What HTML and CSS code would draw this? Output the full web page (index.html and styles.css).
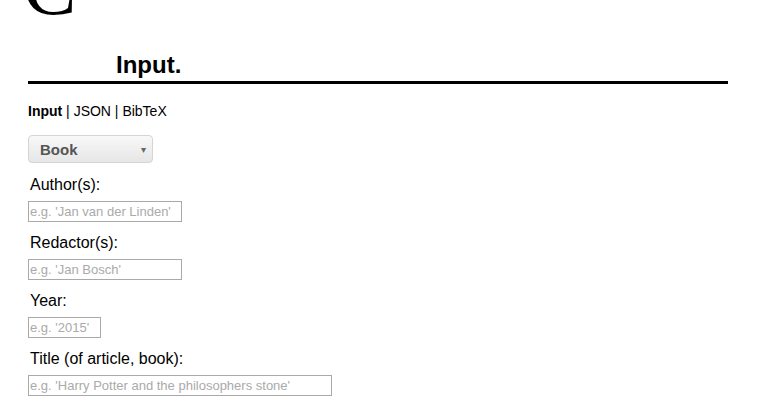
FILE: index.html
```html
<!DOCTYPE html>
<html>
<head>
<meta charset="utf-8">
<link rel="stylesheet" href="styles.css">
</head>
<body>
<div class="logo"><span class="logo-c">C</span></div>
<div class="page">
  <h1 class="title">Input.</h1>
  <nav class="tabs"><b>Input</b> | JSON | BibTeX</nav>
  <div class="select"><span class="select-text">Book</span><span class="select-arrow">▾</span></div>
  <form class="form">
    <div class="field">
      <label class="label">Author(s):</label>
      <input class="input w-md" placeholder="e.g. 'Jan van der Linden'">
    </div>
    <div class="field">
      <label class="label">Redactor(s):</label>
      <input class="input w-md" placeholder="e.g. 'Jan Bosch'">
    </div>
    <div class="field">
      <label class="label">Year:</label>
      <input class="input w-sm" placeholder="e.g. '2015'">
    </div>
    <div class="field">
      <label class="label">Title (of article, book):</label>
      <input class="input w-lg" placeholder="e.g. 'Harry Potter and the philosophers stone'">
    </div>
  </form>
</div>
</body>
</html>
```
FILE: styles.css
```css
html, body {
  margin: 0;
  padding: 0;
  background: #fff;
  overflow: hidden;
}
body {
  font-family: "Liberation Sans", Arial, sans-serif;
  color: #000;
}
.logo {
  height: 20px;
  overflow: hidden;
  padding-left: 23px;
}
.logo-c {
  display: block;
  font-family: "Liberation Serif", serif;
  font-size: 80px;
  line-height: 80px;
  margin-top: -53px;
}
.page {
  width: 700px;
  margin-left: 28px;
}
.title {
  margin: 0;
  padding: 31px 0 2px 88px;
  font-size: 24px;
  font-weight: bold;
  line-height: 28px;
  border-bottom: 3px solid #000;
}
.tabs {
  margin-top: 19px;
  font-size: 14px;
  line-height: 16px;
}
.select {
  margin-top: 16px;
  height: 26px;
  border: 1px solid #d4d4d4;
  border-radius: 4px;
  background: linear-gradient(#f8f8f8, #e6e6e6);
  display: flex;
  align-items: center;
  justify-content: space-between;
  padding: 0 6px 0 11px;
  box-sizing: content-box;
  width: 106px;
  color: #555;
}
.select-text {
  font-weight: bold;
  font-size: 15px;
}
.select-arrow {
  font-size: 10px;
  color: #666;
}
.form {
  margin-top: 13px;
  display: flex;
  flex-direction: column;
  gap: 12px;
}
.field {
  display: flex;
  flex-direction: column;
  align-items: flex-start;
}
.label {
  font-size: 16px;
  line-height: 18px;
  padding-left: 2px;
  margin-bottom: 7px;
}
.input {
  box-sizing: border-box;
  height: 21px;
  border: 1px solid #a9a9a9;
  margin: 0;
  padding: 0 1px;
  font-family: "Liberation Sans", Arial, sans-serif;
  font-size: 13px;
  border-radius: 0;
}
.input::placeholder {
  color: #aaa;
}
.w-md { width: 154px; }
.w-sm { width: 73px; }
.w-lg { width: 304px; }
```
